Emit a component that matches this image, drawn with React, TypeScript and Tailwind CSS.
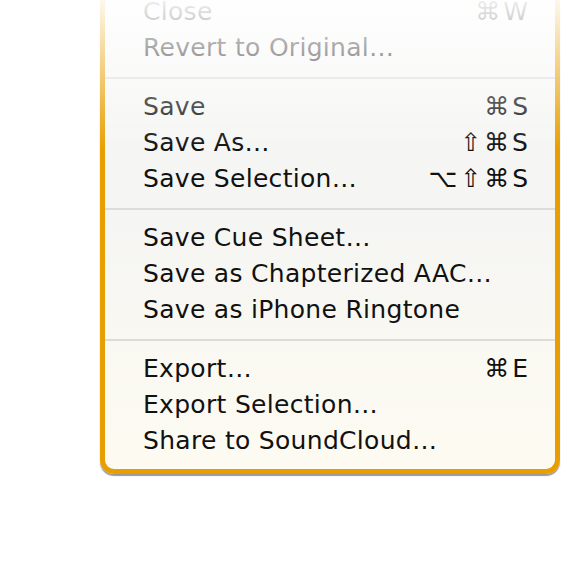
type Item = { label: string; keys?: string };

const groups: Item[][] = [
  [{ label: "Close", keys: "⌘W" }, { label: "Revert to Original…" }],
  [
    { label: "Save", keys: "⌘S" },
    { label: "Save As…", keys: "⇧⌘S" },
    { label: "Save Selection…", keys: "⌥⇧⌘S" },
  ],
  [
    { label: "Save Cue Sheet…" },
    { label: "Save as Chapterized AAC…" },
    { label: "Save as iPhone Ringtone" },
  ],
  [
    { label: "Export…", keys: "⌘E" },
    { label: "Export Selection…" },
    { label: "Share to SoundCloud…" },
  ],
];

const Row = ({ item }: { item: Item }) => (
  <div className="flex h-[36px] items-center justify-between pl-[38px] pr-[27px] text-[25px] tracking-[0.3px] text-[#111]">
    <span>{item.label}</span>
    {item.keys && <span className="tracking-[3px] [&]:mr-[-3px]">{item.keys}</span>}
  </div>
);

export default function App() {
  return (
    <div
      className="relative h-[562px] w-[580px] overflow-hidden bg-white"
      style={{ fontFamily: '"DejaVu Sans", "Liberation Sans", sans-serif' }}
    >
      <div className="ml-[100px] mt-[-40px] w-[460px] rounded-b-[14px] border-[5px] border-t-0 border-[#e89e00] bg-gradient-to-b from-[#f6f6f5] via-[#f5f5f3] to-[#fdfbf1] pt-[34px] shadow-[0_2px_1px_rgba(0,0,0,0.4)]">
        {groups.map((g, i) => (
          <div key={i}>
            {i > 0 && (
              <div className="flex h-[23px] items-center">
                <div className="h-[2px] w-full bg-[#dcdcdc]" />
              </div>
            )}
            {g.map((item) => (
              <Row key={item.label} item={item} />
            ))}
          </div>
        ))}
        <div className="h-[10px]" />
      </div>
      <div className="pointer-events-none absolute left-0 top-0 h-[150px] w-full bg-gradient-to-b from-[rgba(255,255,255,0.93)] to-[rgba(255,255,255,0)]" />
    </div>
  );
}
